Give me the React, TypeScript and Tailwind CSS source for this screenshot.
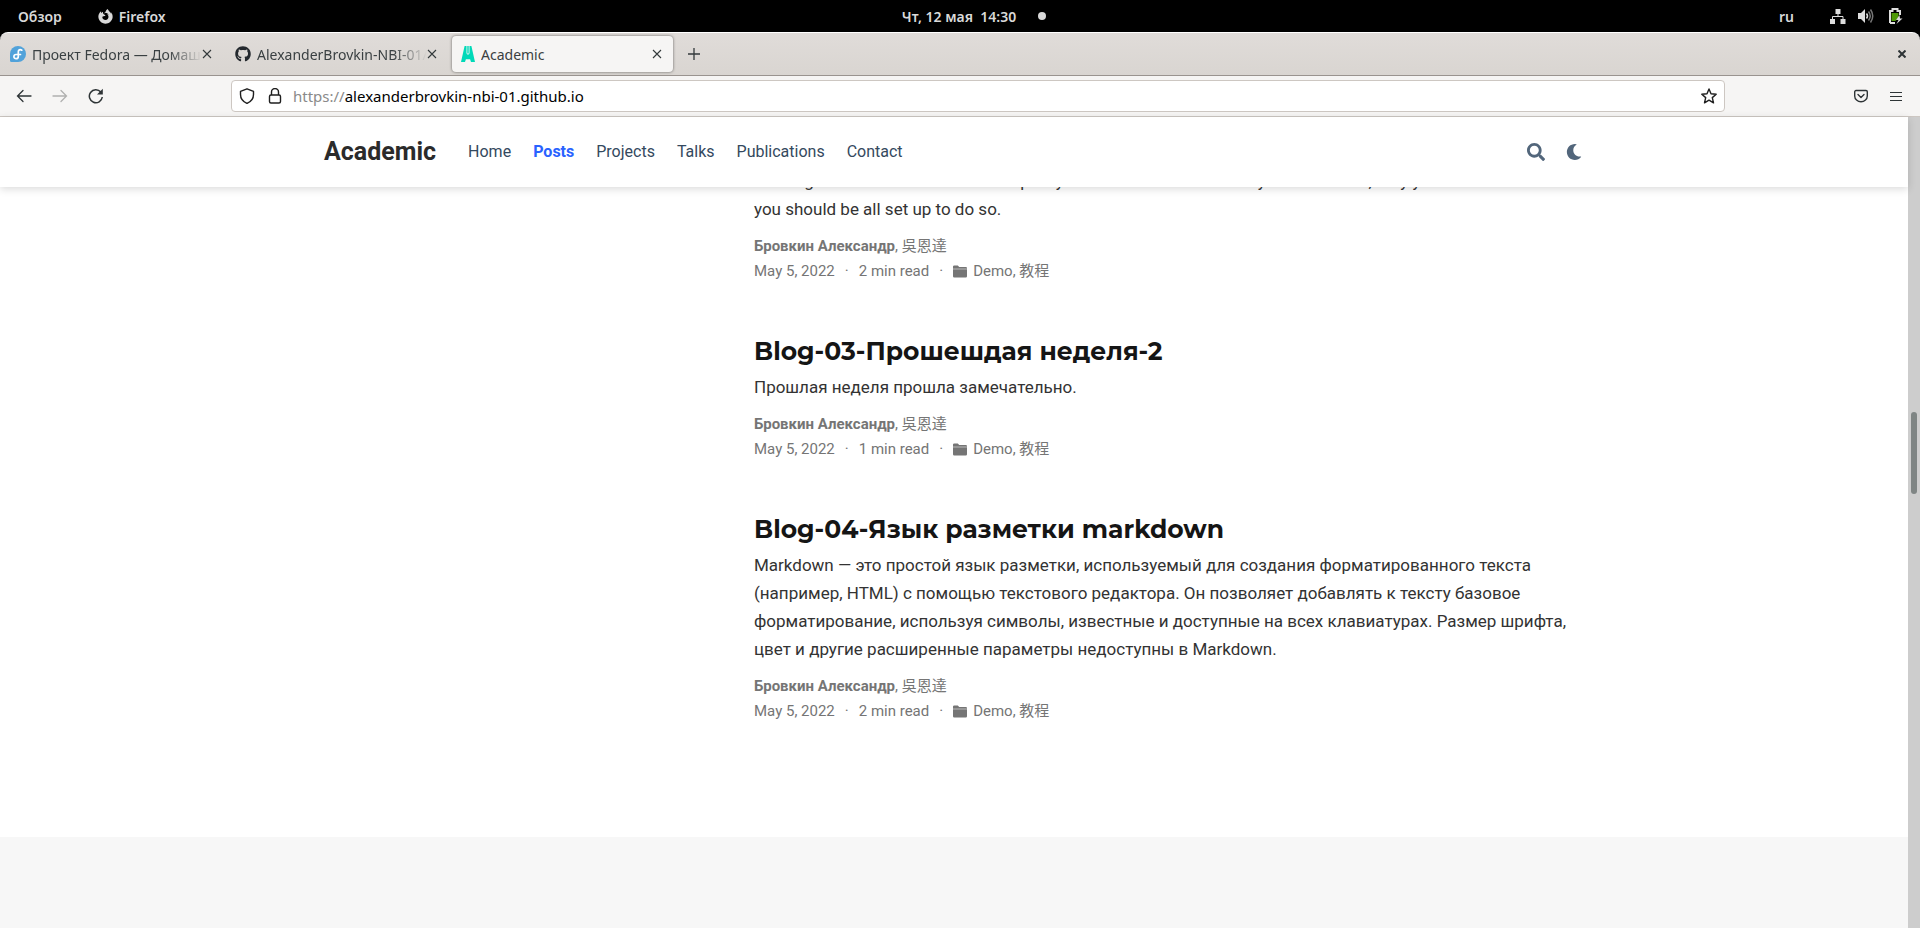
import React from "react";
import { FaSearch, FaMoon, FaGithub, FaFirefoxBrowser } from "react-icons/fa";

type Post = { title?: string; summary: string; minutes: number };

const posts: Post[] = [
  {
    summary:
      "Nothing should block a new author pretty much at the start and they do it on a run, may you need to add some you should be all set up to do so.",
    minutes: 2,
  },
  {
    title: "Blog-03-Прошешдая неделя-2",
    summary: "Прошлая неделя прошла замечательно.",
    minutes: 1,
  },
  {
    title: "Blog-04-Язык разметки markdown",
    summary:
      "Markdown — это простой язык разметки, используемый для создания форматированного текста (например, HTML) с помощью текстового редактора. Он позволяет добавлять к тексту базовое форматирование, используя символы, известные и доступные на всех клавиатурах. Размер шрифта, цвет и другие расширенные параметры недоступны в Markdown.",
    minutes: 2,
  },
];

function FedoraIcon() {
  return (
    <svg viewBox="0 0 16 16" className="size-4 shrink-0" aria-hidden="true">
      <path d="M8 0a8 8 0 1 1 0 16H1.500A1.500 1.500 0 0 1 0 14.500V8a8 8 0 0 1 8-8Z" fill="#51a2da" />
      <path
        d="M11.800 4.200C10 3 8.300 4 8.300 5.800v4.600c0 1.400-1 2.300-2.200 2.300s-2.200-.9-2.200-2 1-2.200 2.200-2.200h4.400"
        fill="none"
        stroke="#fff"
        strokeWidth="1.700"
        strokeLinecap="round"
      />
    </svg>
  );
}

function AcademicIcon() {
  return (
    <svg viewBox="0 0 14 16" className="h-4 w-[14px] shrink-0" aria-hidden="true" fill="#00d9b8">
      <path d="M3.600 0H5.500v7.200L6.300 8.500h1.400l.8-1.300V0h1.900L14 16h-4l-.9-2.800H4.900L4 16H0Z" />
      <path d="M6.300 0h1.400v7.500H6.300Z" />
    </svg>
  );
}

function FolderIcon() {
  return (
    <svg viewBox="0 0 14 13" className="mr-[6px] h-[13px] w-[14px]" aria-hidden="true" fill="currentColor">
      <path d="M0 1.500A1.200 1.200 0 0 1 1.200.4h3.600l1.400 1.500h6.600A1.200 1.200 0 0 1 14 3.100v.6H0Z" />
      <path d="M0 4.200h14v7.100a1.200 1.200 0 0 1-1.200 1.200H1.200A1.200 1.200 0 0 1 0 11.300Z" />
    </svg>
  );
}

function CloseIcon() {
  return (
    <svg viewBox="0 0 10 10" className="size-[10px]" aria-hidden="true" fill="none" stroke="#33393b" strokeWidth="1.100">
      <path d="M1 1l8 8M9 1L1 9" />
    </svg>
  );
}

function SystemBar() {
  return (
    <div className="grid h-8 shrink-0 grid-cols-[1fr_auto_1fr] items-center bg-black text-[14px] font-semibold text-[#d9d9d9]">
      <div className="flex items-center pl-[18px]">
        <button type="button">Обзор</button>
        <button type="button" className="ml-9 flex items-center gap-[6px]">
          <FaFirefoxBrowser className="size-[15px]" aria-hidden="true" />
          Firefox
        </button>
      </div>
      <div className="flex items-center gap-[22px] pl-7">
        <time className="whitespace-pre">Чт, 12 мая  14:30</time>
        <span className="size-2 rounded-full bg-[#d9d9d9]" />
      </div>
      <div className="flex items-center justify-end pr-4">
        <span className="mr-9">ru</span>
        <svg viewBox="0 0 16 16" className="mr-3 size-4" aria-hidden="true" fill="#dedede">
          <path d="M5.500 1h5v5h-5zM0 11h5v5H0zM10.500 11h5v5h-5z" />
          <path d="M8 6v3M2.500 11V8.500h10.500V11" fill="none" stroke="#dedede" />
        </svg>
        <svg viewBox="0 0 16 16" className="mr-[14px] size-4" aria-hidden="true">
          <path d="M0 5h3l4-4v14l-4-4H0z" fill="#dedede" />
          <path d="M8.500 5.500q2 2.500 0 5" fill="none" stroke="#dedede" strokeWidth="1.500" />
          <path d="M10.500 3.500q3.500 4.500 0 9M12.500 1.500q4.500 6.500 0 13" fill="none" stroke="#777" strokeWidth="1.500" />
        </svg>
        <svg viewBox="0 0 16 16" className="size-4" aria-hidden="true">
          <path d="M2 15V3h2.500V1h5v2H12v4M2 15h5" fill="none" stroke="#dedede" strokeWidth="2" />
          <path d="M3.500 5h7v4l-3 4h-4z" fill="#4e9a06" />
          <path d="M11.500 7L8 12h2.500L8.500 16l6-5.500H12z" fill="#dedede" />
        </svg>
      </div>
    </div>
  );
}

function Tab({ icon, label, active = false }: { icon: React.ReactNode; label: string; active?: boolean }) {
  return (
    <div
      className={
        active
          ? "ml-[2px] flex h-9 w-[221px] items-center rounded-[4px] bg-[#f6f5f4] pr-[11px] pl-[9px] shadow-[0_0_3px_rgba(0,0,0,0.550)]"
          : "flex h-9 w-[225px] items-center pr-[13px] pl-[10px]"
      }
    >
      {icon}
      <button
        type="button"
        className={
          active
            ? "ml-[6px] flex-1 overflow-hidden text-left whitespace-nowrap"
            : "ml-[6px] flex-1 overflow-hidden text-left whitespace-nowrap [mask-image:linear-gradient(to_right,#000_80%,transparent)]"
        }
      >
        {label}
      </button>
      <button type="button" aria-label="Закрыть вкладку">
        <CloseIcon />
      </button>
    </div>
  );
}

function TabStrip() {
  return (
    <div className="bg-black">
      <div className="flex h-11 items-center rounded-t-[8px] border-t border-b border-t-white border-b-[#99938f] bg-linear-to-b from-[#e0dcd9] to-[#d9d5d1] text-[14px] text-[#3a4042]">
        <Tab icon={<FedoraIcon />} label="Проект Fedora — Домашняя" />
        <Tab icon={<FaGithub className="size-4 shrink-0 text-[#24292e]" aria-hidden="true" />} label="AlexanderBrovkin-NBI-01/Ale" />
        <Tab icon={<AcademicIcon />} label="Academic" active />
        <button type="button" aria-label="Новая вкладка" className="ml-[15px]">
          <svg viewBox="0 0 12 12" className="size-3" aria-hidden="true" stroke="#33393b" strokeWidth="1.300">
            <path d="M6 0v12M0 6h12" />
          </svg>
        </button>
        <button type="button" aria-label="Закрыть окно" className="mr-[14px] ml-auto">
          <svg viewBox="0 0 8 8" className="size-2" aria-hidden="true" stroke="#2e3436" strokeWidth="2">
            <path d="M0.500 0.500l7 7M7.500 0.500l-7 7" />
          </svg>
        </button>
      </div>
    </div>
  );
}

function Toolbar() {
  return (
    <div className="flex h-[41px] shrink-0 items-center border-b border-[#cdc7c2] bg-[#f6f5f4]">
      <div className="flex w-[231px] items-center gap-5 pl-4 text-[#2e3436]">
        <button type="button" aria-label="Назад">
          <svg viewBox="0 0 16 16" className="size-4" aria-hidden="true" fill="none" stroke="currentColor" strokeWidth="1.300" strokeLinecap="round">
            <path d="M15 8H1.500M7 2.500L1.500 8 7 13.500" />
          </svg>
        </button>
        <button type="button" aria-label="Вперёд" className="text-[#b0b0af]">
          <svg viewBox="0 0 16 16" className="size-4" aria-hidden="true" fill="none" stroke="currentColor" strokeWidth="1.300" strokeLinecap="round">
            <path d="M1 8h13.500M9 2.500L14.500 8 9 13.500" />
          </svg>
        </button>
        <button type="button" aria-label="Обновить">
          <svg viewBox="0 0 16 16" className="size-4" aria-hidden="true" fill="none" stroke="currentColor" strokeWidth="1.500">
            <path d="M14.300 9A6.500 6.500 0 1 1 12.800 4" />
            <path d="M14.800 0.800v5.700H9z" fill="currentColor" stroke="none" />
          </svg>
        </button>
      </div>
      <div className="flex h-8 flex-1 items-center rounded-[4px] border border-[#cdc7c2] bg-white px-[7px] text-[#1f1f1f]">
        <svg viewBox="0 0 16 16" className="size-4" aria-hidden="true" fill="none" stroke="currentColor" strokeWidth="1.400" strokeLinejoin="round">
          <path d="M8 .8l6.500 2.600v3.200c0 4-2.500 7.200-6.500 8.800C4 13.800 1.500 10.600 1.500 6.600V3.400z" />
        </svg>
        <svg viewBox="0 0 16 16" className="ml-3 size-4" aria-hidden="true" fill="none" stroke="currentColor" strokeWidth="1.400">
          <path d="M4.500 7V4a3.500 3.500 0 0 1 7 0v3" />
          <rect x="2.500" y="7" width="11" height="8" rx="1.500" />
        </svg>
        <button type="button" className="ml-[10px] flex-1 text-left text-[15px] text-black">
          <span className="text-[#8a8a8a]">https://</span>alexanderbrovkin-nbi-01.github.io
        </button>
        <button type="button" aria-label="Добавить в закладки">
          <svg viewBox="0 0 16 16" className="size-4" aria-hidden="true" fill="none" stroke="currentColor" strokeWidth="1.400" strokeLinejoin="round">
            <path d="M8 1l2 4.700 5.200.5-3.900 3.400 1.200 5.200L8 12.100l-4.500 2.700 1.200-5.200L.8 6.200 6 5.700z" />
          </svg>
        </button>
      </div>
      <div className="flex w-[195px] items-center justify-end gap-[22px] pr-[18px] text-[#2e3436]">
        <button type="button" aria-label="Сохранить в Pocket">
          <svg viewBox="0 0 14 14" className="size-[14px]" aria-hidden="true" fill="none" stroke="currentColor" strokeWidth="1.400" strokeLinecap="round" strokeLinejoin="round">
            <path d="M2 1.500h10a1.300 1.300 0 0 1 1.300 1.300V7A6.300 5.800 0 0 1 .7 7V2.800A1.300 1.300 0 0 1 2 1.500zM4 5.500l3 3 3-3" />
          </svg>
        </button>
        <button type="button" aria-label="Меню">
          <svg viewBox="0 0 12 11" className="h-[11px] w-3" aria-hidden="true" stroke="currentColor">
            <path d="M0 1.500h12M0 5.500h12M0 9.500h12" />
          </svg>
        </button>
      </div>
    </div>
  );
}

function SiteHeader() {
  const links = ["Home", "Posts", "Projects", "Talks", "Publications", "Contact"];
  return (
    <header className="relative z-10 h-[70px] bg-white shadow-[0_2px_8px_rgba(0,0,0,0.150)]">
      <div className="mx-auto flex h-full max-w-[1260px] items-center">
        <a href="#top" className="text-[25px] font-bold text-[#2b2b2b]">
          Academic
        </a>
        <nav className="ml-8 flex gap-[22px] text-[16px] text-[#34495e]">
          {links.map((l) => (
            <a key={l} href={"#" + l.toLowerCase()} className={l === "Posts" ? "font-bold text-[#2962ff]" : ""}>
              {l}
            </a>
          ))}
        </nav>
        <div className="mr-[2px] ml-auto flex items-center gap-[21px] text-[#52667b]">
          <button type="button" aria-label="Search">
            <FaSearch className="size-[18px]" />
          </button>
          <button type="button" aria-label="Theme">
            <FaMoon className="size-4" />
          </button>
        </div>
      </div>
    </header>
  );
}

function PostItem({ post }: { post: Post }) {
  return (
    <article className="mb-[51px]">
      {post.title && (
        <h3 className="mb-[6px] text-[25px] leading-8 font-bold text-[#151515] font-['Montserrat','Inter',sans-serif]">
          <a href="#post">{post.title}</a>
        </h3>
      )}
      <p className="text-[17px] leading-7 text-[#333]">{post.summary}</p>
      <div className="mt-[11px] text-[15px] leading-[25px] text-[#757575]">
        <div>
          <a href="#author" className="font-bold">Бровкин Александр</a>, <a href="#coauthor">吳恩達</a>
        </div>
        <div className="flex items-center">
          <span>May 5, 2022</span>
          <span className="mx-[10px]">·</span>
          <span>{post.minutes} min read</span>
          <span className="mx-[10px]">·</span>
          <FolderIcon />
          <span>
            <a href="#demo">Demo</a>, <a href="#tutorial">教程</a>
          </span>
        </div>
      </div>
    </article>
  );
}

export default function App() {
  return (
    <div className="flex h-screen flex-col overflow-hidden bg-white">
      <div className="font-['Noto_Sans',sans-serif]">
        <SystemBar />
        <TabStrip />
        <Toolbar />
      </div>
      <div className="flex min-h-0 flex-1 font-['Roboto','Noto_Sans_CJK_JP',sans-serif]">
        <div className="flex min-w-0 flex-1 flex-col">
          <SiteHeader />
          <main className="flex-1 overflow-hidden bg-[#f7f7f7]">
            <section className="bg-white pb-[62px]">
              <div className="mx-auto -mt-5 max-w-[1260px] pl-[430px]">
                {posts.map((p) => (
                  <PostItem key={p.title ?? "first"} post={p} />
                ))}
              </div>
            </section>
          </main>
        </div>
        <div className="w-3 bg-[#cdcdcd] pt-[295px]">
          <div className="mx-auto h-[82px] w-[6px] rounded-full bg-[#7f8584]" />
        </div>
      </div>
    </div>
  );
}
